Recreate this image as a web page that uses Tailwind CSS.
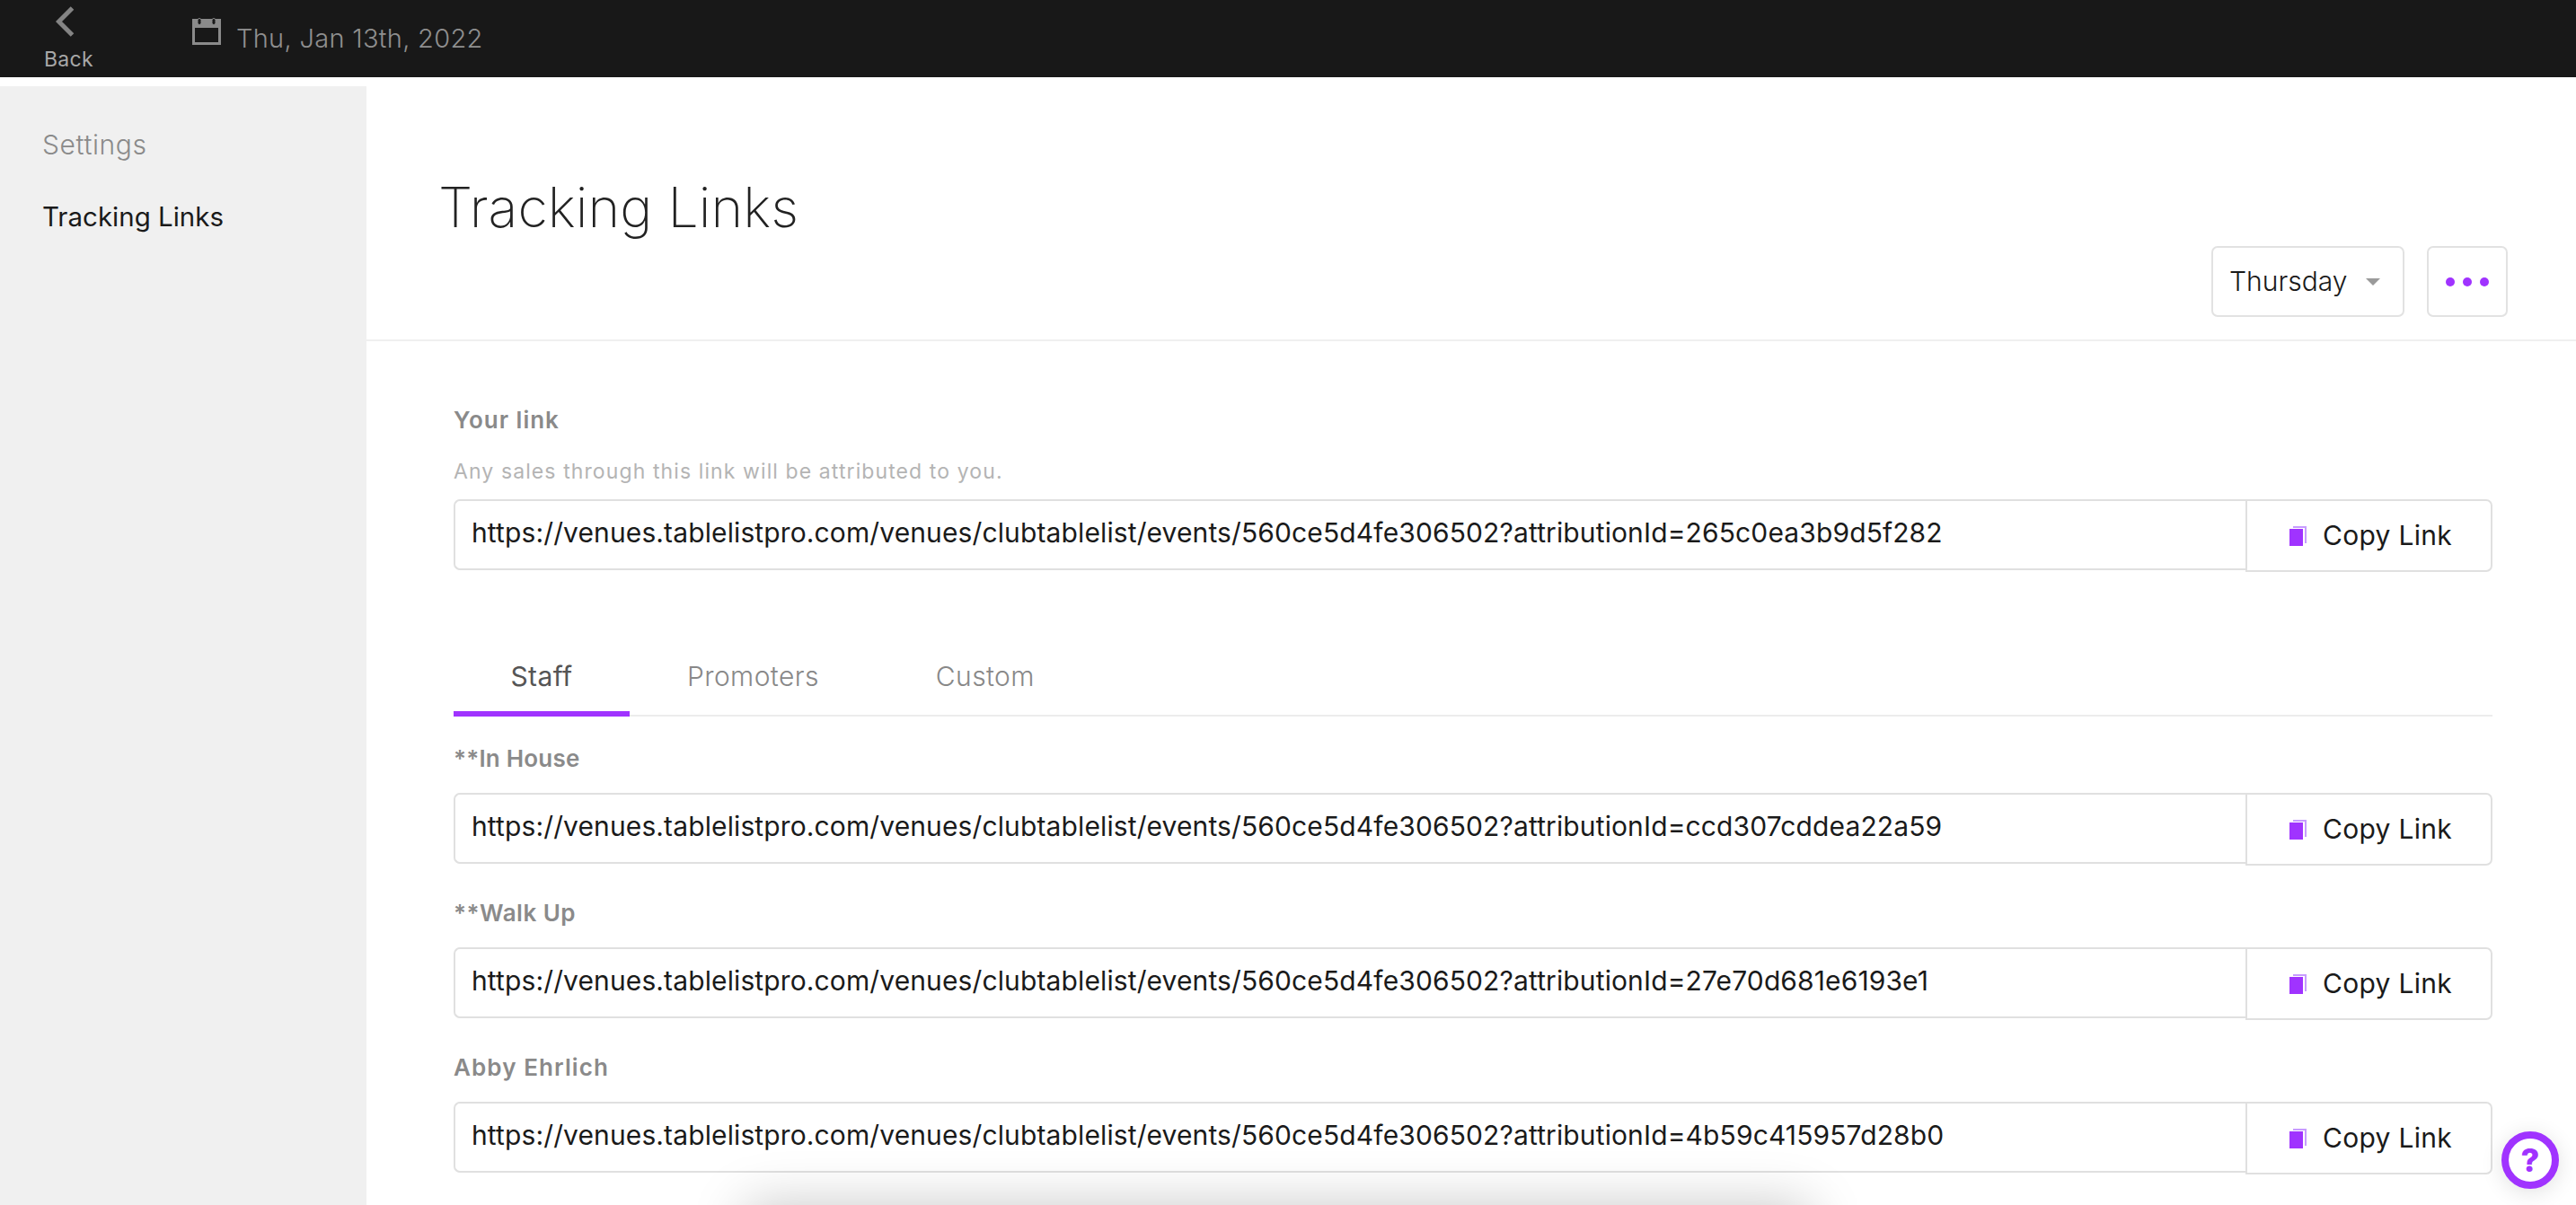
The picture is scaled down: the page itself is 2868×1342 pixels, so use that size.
<!DOCTYPE html>
<html lang="en">
<head>
    <meta charset="UTF-8">
    <title>Tracking Links</title>
    <script src="https://cdn.jsdelivr.net/npm/@tailwindcss/browser@4"></script>
</head>
<body class="h-[1342px] overflow-hidden bg-white font-['Inter',sans-serif] text-[#1a1a1a]">
    <!-- Top bar -->
    <header class="relative flex h-[86px] items-start bg-[#181818]">
        <a class="ml-[49px] flex w-[54px] flex-col items-start pt-[7px]">
            <svg class="ml-[13px] h-[34px] w-[21px]" viewBox="0 0 21 34" fill="none" stroke="#848484" stroke-width="5"><path d="M18.5 2 L3.5 17 L18.5 32"/></svg>
            <span class="mt-[12px] text-[23px] leading-[26px] tracking-[0.3px] text-[#a8a8a8]">Back</span>
        </a>
        <div class="ml-[111px] flex pt-[20px]">
            <svg class="h-[30px] w-[32px]" viewBox="0 0 32 30" fill="none"><path d="M1.5 2.5H30.5V28.5H1.5Z" stroke="#8a8a8a" stroke-width="3"/><path d="M1.5 2H30.5V11H1.5Z" fill="#8a8a8a"/><rect x="6" y="0.5" width="4" height="7" rx="2" fill="#181818" stroke="#8a8a8a" stroke-width="1"/><rect x="22" y="0.5" width="4" height="7" rx="2" fill="#181818" stroke="#8a8a8a" stroke-width="1"/></svg>
            <span class="ml-[17px] mt-[6px] text-[29px] leading-[34px] tracking-[0.3px] font-light text-[#8f8f8f]">Thu, Jan 13th, 2022</span>
        </div>
    </header>

    <div class="flex h-[1256px]">
        <!-- Sidebar -->
        <aside class="mt-[10px] w-[408px] shrink-0 bg-[#f0f0f0] pl-[47px] pt-[48px] leading-[34px]">
            <p class="text-[30px] font-light tracking-[0.6px] text-[#8a8a8a]">Settings</p>
            <p class="mt-[46px] text-[29.5px] text-[#1a1a1a]">Tracking Links</p>
        </aside>

        <main class="min-w-0 flex-1">
            <!-- Title bar -->
            <section class="flex h-[294px] border-b-2 border-[#f0f0f0] pl-[80px] pr-[76px]">
                <h1 class="mt-[110px] text-[61px] leading-[70px] font-extralight text-[#222]">Tracking Links</h1>
                <div class="ml-auto mt-[188px] flex gap-[25px]">
                    <div class="flex h-[79px] w-[215px] items-center rounded-[7px] border-2 border-[#e2e2e2] pl-[18px] pr-[25px] text-[30px] font-light">
                        Thursday
                        <span class="ml-auto h-0 w-0 border-x-[8px] border-t-[8px] border-x-transparent border-t-[#9a9a9a]"></span>
                    </div>
                    <button class="flex h-[79px] w-[90px] items-center justify-center gap-[9px] rounded-[7px] border-2 border-[#e2e2e2]">
                        <span class="size-[10px] rounded-full bg-[#a033ff]"></span>
                        <span class="size-[10px] rounded-full bg-[#a033ff]"></span>
                        <span class="size-[10px] rounded-full bg-[#a033ff]"></span>
                    </button>
                </div>
            </section>

            <section class="pl-[97px] pr-[93px]">
                <!-- Your link -->
                <p class="mt-[73px] text-[26px] leading-[30px] tracking-[1px] font-semibold text-[#8a8a8a]">Your link</p>
                <p class="mt-[29px] text-[23px] leading-[26px] tracking-[1.1px] text-[#b4b4b4]">Any sales through this link will be attributed to you.</p>
                <div class="mt-[18px] flex items-start">
                    <div class="flex h-[79px] flex-1 items-center rounded-l-[7px] border-2 border-r-0 border-[#e0e0e0] pl-[18px] pb-[4px] text-[30px] tracking-[0.12px]">https://venues.tablelistpro.com/venues/clubtablelist/events/560ce5d4fe306502?attributionId=265c0ea3b9d5f282</div>
                    <button class="flex h-[81px] w-[275px] items-center rounded-r-[7px] border-2 border-[#e0e0e0] pl-[47px] text-[30px] tracking-[0.3px]">
                        <svg class="h-[22px] w-[19px]" viewBox="0 0 19 22"><path d="M4 0H19V19H17V2H4Z" fill="#c79bff"/><path d="M0 3H15V22H0Z" fill="#a033ff"/></svg>
                        <span class="ml-[18px]">Copy Link</span>
                    </button>
                </div>

                <!-- Tabs -->
                <div class="mt-[84px] flex h-[77px] border-b-2 border-[#ececec] text-[30px] font-light leading-[36px] tracking-[0.4px]">
                    <div class="-mb-[2px] w-[196px] border-b-[6px] border-[#a033ff] pt-[14px] text-center font-normal text-[#555]">Staff</div>
                    <div class="ml-[64px] pt-[14px] text-[#888]">Promoters</div>
                    <div class="ml-[130px] pt-[14px] text-[#888]">Custom</div>
                </div>

                <!-- Staff links -->
                <p class="mt-[32px] text-[26px] leading-[30px] tracking-[0.2px] font-semibold text-[#8a8a8a]">**In House</p>
                <div class="mt-[23px] flex items-start">
                    <div class="flex h-[79px] flex-1 items-center rounded-l-[7px] border-2 border-r-0 border-[#e0e0e0] pl-[18px] pb-[4px] text-[30px] tracking-[0.12px]">https://venues.tablelistpro.com/venues/clubtablelist/events/560ce5d4fe306502?attributionId=ccd307cddea22a59</div>
                    <button class="flex h-[81px] w-[275px] items-center rounded-r-[7px] border-2 border-[#e0e0e0] pl-[47px] text-[30px] tracking-[0.3px]">
                        <svg class="h-[22px] w-[19px]" viewBox="0 0 19 22"><path d="M4 0H19V19H17V2H4Z" fill="#c79bff"/><path d="M0 3H15V22H0Z" fill="#a033ff"/></svg>
                        <span class="ml-[18px]">Copy Link</span>
                    </button>
                </div>

                <p class="mt-[38px] text-[26px] leading-[30px] tracking-[0.5px] font-semibold text-[#8a8a8a]">**Walk Up</p>
                <div class="mt-[23px] flex items-start">
                    <div class="flex h-[79px] flex-1 items-center rounded-l-[7px] border-2 border-r-0 border-[#e0e0e0] pl-[18px] pb-[4px] text-[30px] tracking-[0.12px]">https://venues.tablelistpro.com/venues/clubtablelist/events/560ce5d4fe306502?attributionId=27e70d681e6193e1</div>
                    <button class="flex h-[81px] w-[275px] items-center rounded-r-[7px] border-2 border-[#e0e0e0] pl-[47px] text-[30px] tracking-[0.3px]">
                        <svg class="h-[22px] w-[19px]" viewBox="0 0 19 22"><path d="M4 0H19V19H17V2H4Z" fill="#c79bff"/><path d="M0 3H15V22H0Z" fill="#a033ff"/></svg>
                        <span class="ml-[18px]">Copy Link</span>
                    </button>
                </div>

                <p class="mt-[38px] text-[26px] leading-[30px] tracking-[1.1px] font-semibold text-[#8a8a8a]">Abby Ehrlich</p>
                <div class="mt-[23px] flex items-start">
                    <div class="flex h-[79px] flex-1 items-center rounded-l-[7px] border-2 border-r-0 border-[#e0e0e0] pl-[18px] pb-[4px] text-[30px] tracking-[0.12px]">https://venues.tablelistpro.com/venues/clubtablelist/events/560ce5d4fe306502?attributionId=4b59c415957d28b0</div>
                    <button class="flex h-[81px] w-[275px] items-center rounded-r-[7px] border-2 border-[#e0e0e0] pl-[47px] text-[30px] tracking-[0.3px]">
                        <svg class="h-[22px] w-[19px]" viewBox="0 0 19 22"><path d="M4 0H19V19H17V2H4Z" fill="#c79bff"/><path d="M0 3H15V22H0Z" fill="#a033ff"/></svg>
                        <span class="ml-[18px]">Copy Link</span>
                    </button>
                </div>
            </section>
        </main>
    </div>

    <!-- Help button -->
    <button class="absolute left-[2785px] top-[1260px] flex size-[64px] items-center justify-center rounded-full border-[8px] border-[#a033ff] bg-white text-[36px] leading-none font-extrabold text-[#a033ff] shadow-[0_4px_24px_rgba(0,0,0,0.12)]">?</button>

    <!-- Shadow of a panel just below the fold, clipped to the frame -->
    <div class="pointer-events-none absolute left-0 top-0 h-[1342px] w-[2868px] overflow-hidden">
        <div class="absolute left-[830px] top-[1342px] h-[100px] w-[1185px] shadow-[0_0_60px_rgba(0,0,0,0.22)]"></div>
    </div>
</body>
</html>
